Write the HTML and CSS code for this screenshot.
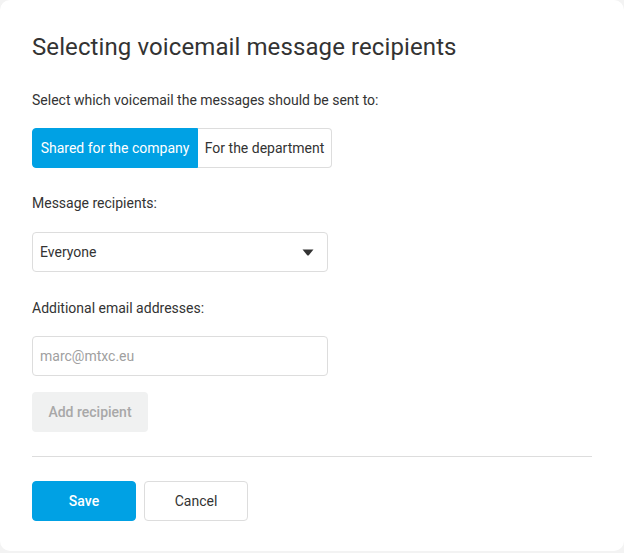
FILE: index.html
```html
<!DOCTYPE html>
<html>
<head>
<meta charset="utf-8">
<link rel="stylesheet" href="styles.css">
</head>
<body>
<div class="dialog">
  <h1 class="title">Selecting voicemail message recipients</h1>
  <p class="label first">Select which voicemail the messages should be sent to:</p>
  <div class="segmented">
    <button class="seg active">Shared for the company</button>
    <button class="seg">For the department</button>
  </div>
  <p class="label">Message recipients:</p>
  <div class="select">
    <span>Everyone</span>
    <svg class="caret" width="12" height="7" viewBox="0 0 12 7"><path d="M0.5 0.5 L11.5 0.5 L7 6 Q6 7 5 6 Z" fill="#333"/></svg>
  </div>
  <p class="label">Additional email addresses:</p>
  <input class="input" type="text" placeholder="marc@mtxc.eu">
  <button class="btn-disabled">Add recipient</button>
  <hr class="divider">
  <div class="actions">
    <button class="btn primary">Save</button>
    <button class="btn secondary">Cancel</button>
  </div>
</div>
</body>
</html>
```
FILE: styles.css
```css
* { box-sizing: border-box; }
html, body { margin: 0; padding: 0; }
body {
  background: #f3f3f3;
  font-family: Roboto, "Liberation Sans", sans-serif;
  color: #333;
  width: 624px;
  height: 553px;
}
.dialog {
  background: #fff;
  width: 624px;
  height: 551px;
  border-radius: 10px;
  padding: 32px 32px 0 32px;
  display: flex;
  flex-direction: column;
  align-items: flex-start;
}
.title {
  margin: 0;
  font-size: 24px;
  font-weight: 400;
  line-height: 30px;
  letter-spacing: 0.1px;
  color: #333;
}
.label {
  margin: 0;
  font-size: 14px;
  line-height: 20px;
  color: #333;
}
.label.first { margin-top: 28px; }
.segmented {
  display: flex;
  margin-top: 18px;
}
.seg {
  height: 40px;
  font-family: inherit;
  font-size: 14px;
  padding: 0;
  border: 1px solid #ddd;
  background: #fff;
  color: #333;
  margin: 0;
  width: 134px;
}
.seg.active {
  width: 166px;
  background: #00a1e4;
  border-color: #00a1e4;
  color: #fff;
  border-radius: 4px 0 0 4px;
}
.seg:last-child {
  border-left: none;
  border-radius: 0 4px 4px 0;
}
.segmented + .label { margin-top: 25px; }
.select {
  margin-top: 19px;
  width: 296px;
  height: 40px;
  border: 1px solid #ddd;
  border-radius: 4px;
  display: flex;
  align-items: center;
  justify-content: space-between;
  padding: 0 13px 0 7px;
  font-size: 14px;
}
.caret { display: block; }
.select + .label { margin-top: 26px; }
.input {
  margin-top: 18px;
  width: 296px;
  height: 40px;
  border: 1px solid #ddd;
  border-radius: 4px;
  padding: 0 7px;
  font-family: inherit;
  font-size: 14px;
  color: #333;
  outline: none;
}
.input::placeholder { color: #a0a0a0; }
.btn-disabled {
  margin-top: 16px;
  width: 116px;
  height: 40px;
  border: none;
  border-radius: 4px;
  background: #f0f1f1;
  color: #a8a8a8;
  font-family: inherit;
  font-size: 14px;
  font-weight: 500;
}
.divider {
  align-self: stretch;
  margin: 24px 0 0 0;
  border: none;
  border-top: 1px solid #ddd;
  height: 0;
}
.actions {
  display: flex;
  gap: 8px;
  margin-top: 24px;
}
.btn {
  width: 104px;
  height: 40px;
  border-radius: 4px;
  font-family: inherit;
  font-size: 14px;
  font-weight: 500;
}
.btn.primary {
  background: #00a1e4;
  border: 1px solid #00a1e4;
  color: #fff;
}
.btn.secondary {
  background: #fff;
  border: 1px solid #ddd;
  color: #333;
  font-weight: 400;
}
```
